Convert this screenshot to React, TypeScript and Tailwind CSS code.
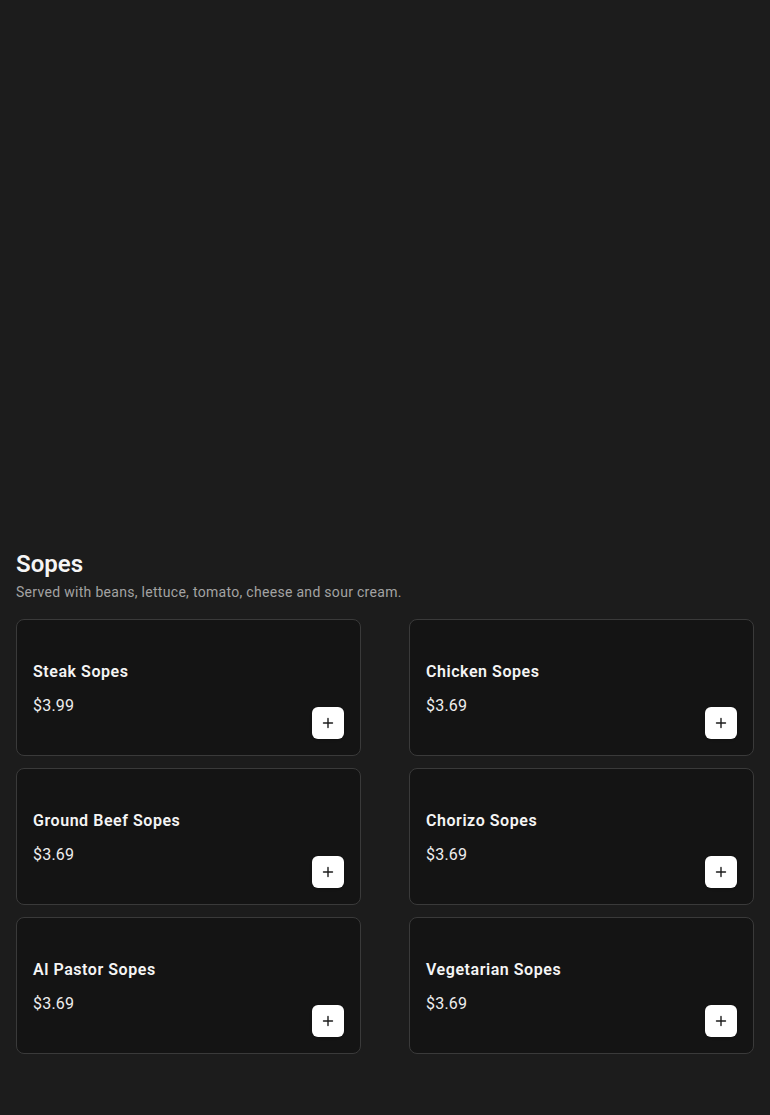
import React from "react";

const items = [
  { name: "Steak Sopes", price: "$3.99" },
  { name: "Chicken Sopes", price: "$3.69" },
  { name: "Ground Beef Sopes", price: "$3.69" },
  { name: "Chorizo Sopes", price: "$3.69" },
  { name: "Al Pastor Sopes", price: "$3.69" },
  { name: "Vegetarian Sopes", price: "$3.69" },
];

function Plus() {
  return (
    <svg width="12" height="12" viewBox="0 0 12 12" fill="none">
      <path d="M6 1.5v9M1.5 6h9" stroke="#1c1c1c" strokeWidth="1.4" strokeLinecap="round" />
    </svg>
  );
}

export default function App() {
  return (
    <div className="min-h-[1115px] w-full bg-[#1c1c1c] text-white" style={{ fontFamily: "Roboto, 'Noto Sans', sans-serif" }}>
      <div className="h-[548px]" />
      <div className="px-4">
        <h2 className="text-[24px] font-semibold leading-[32px] text-[#f5f5f5]">Sopes</h2>
        <p className="text-[14px] leading-[20px] tracking-[0.3px] text-[#a3a3a3] mt-[2px]">Served with beans, lettuce, tomato, cheese and sour cream.</p>
        <div className="grid grid-cols-2 gap-x-12 gap-y-3 mt-[17px]">
          {items.map((it) => (
            <div key={it.name} className="h-[137px] rounded-lg border border-[#3a3a3a] bg-[#141414] px-4 pb-4 pt-[40px] flex justify-between">
              <div>
                <div className="text-[16px] font-semibold leading-[24px] tracking-[0.55px] text-[#f5f5f5]">{it.name}</div>
                <div className="text-[16px] leading-[24px] mt-[10px] tracking-[0.2px] text-[#eeeeee]">{it.price}</div>
              </div>
              <div className="self-end">
                <button className="w-8 h-8 rounded-md bg-white flex items-center justify-center shadow">
                  <Plus />
                </button>
              </div>
            </div>
          ))}
        </div>
      </div>
    </div>
  );
}
